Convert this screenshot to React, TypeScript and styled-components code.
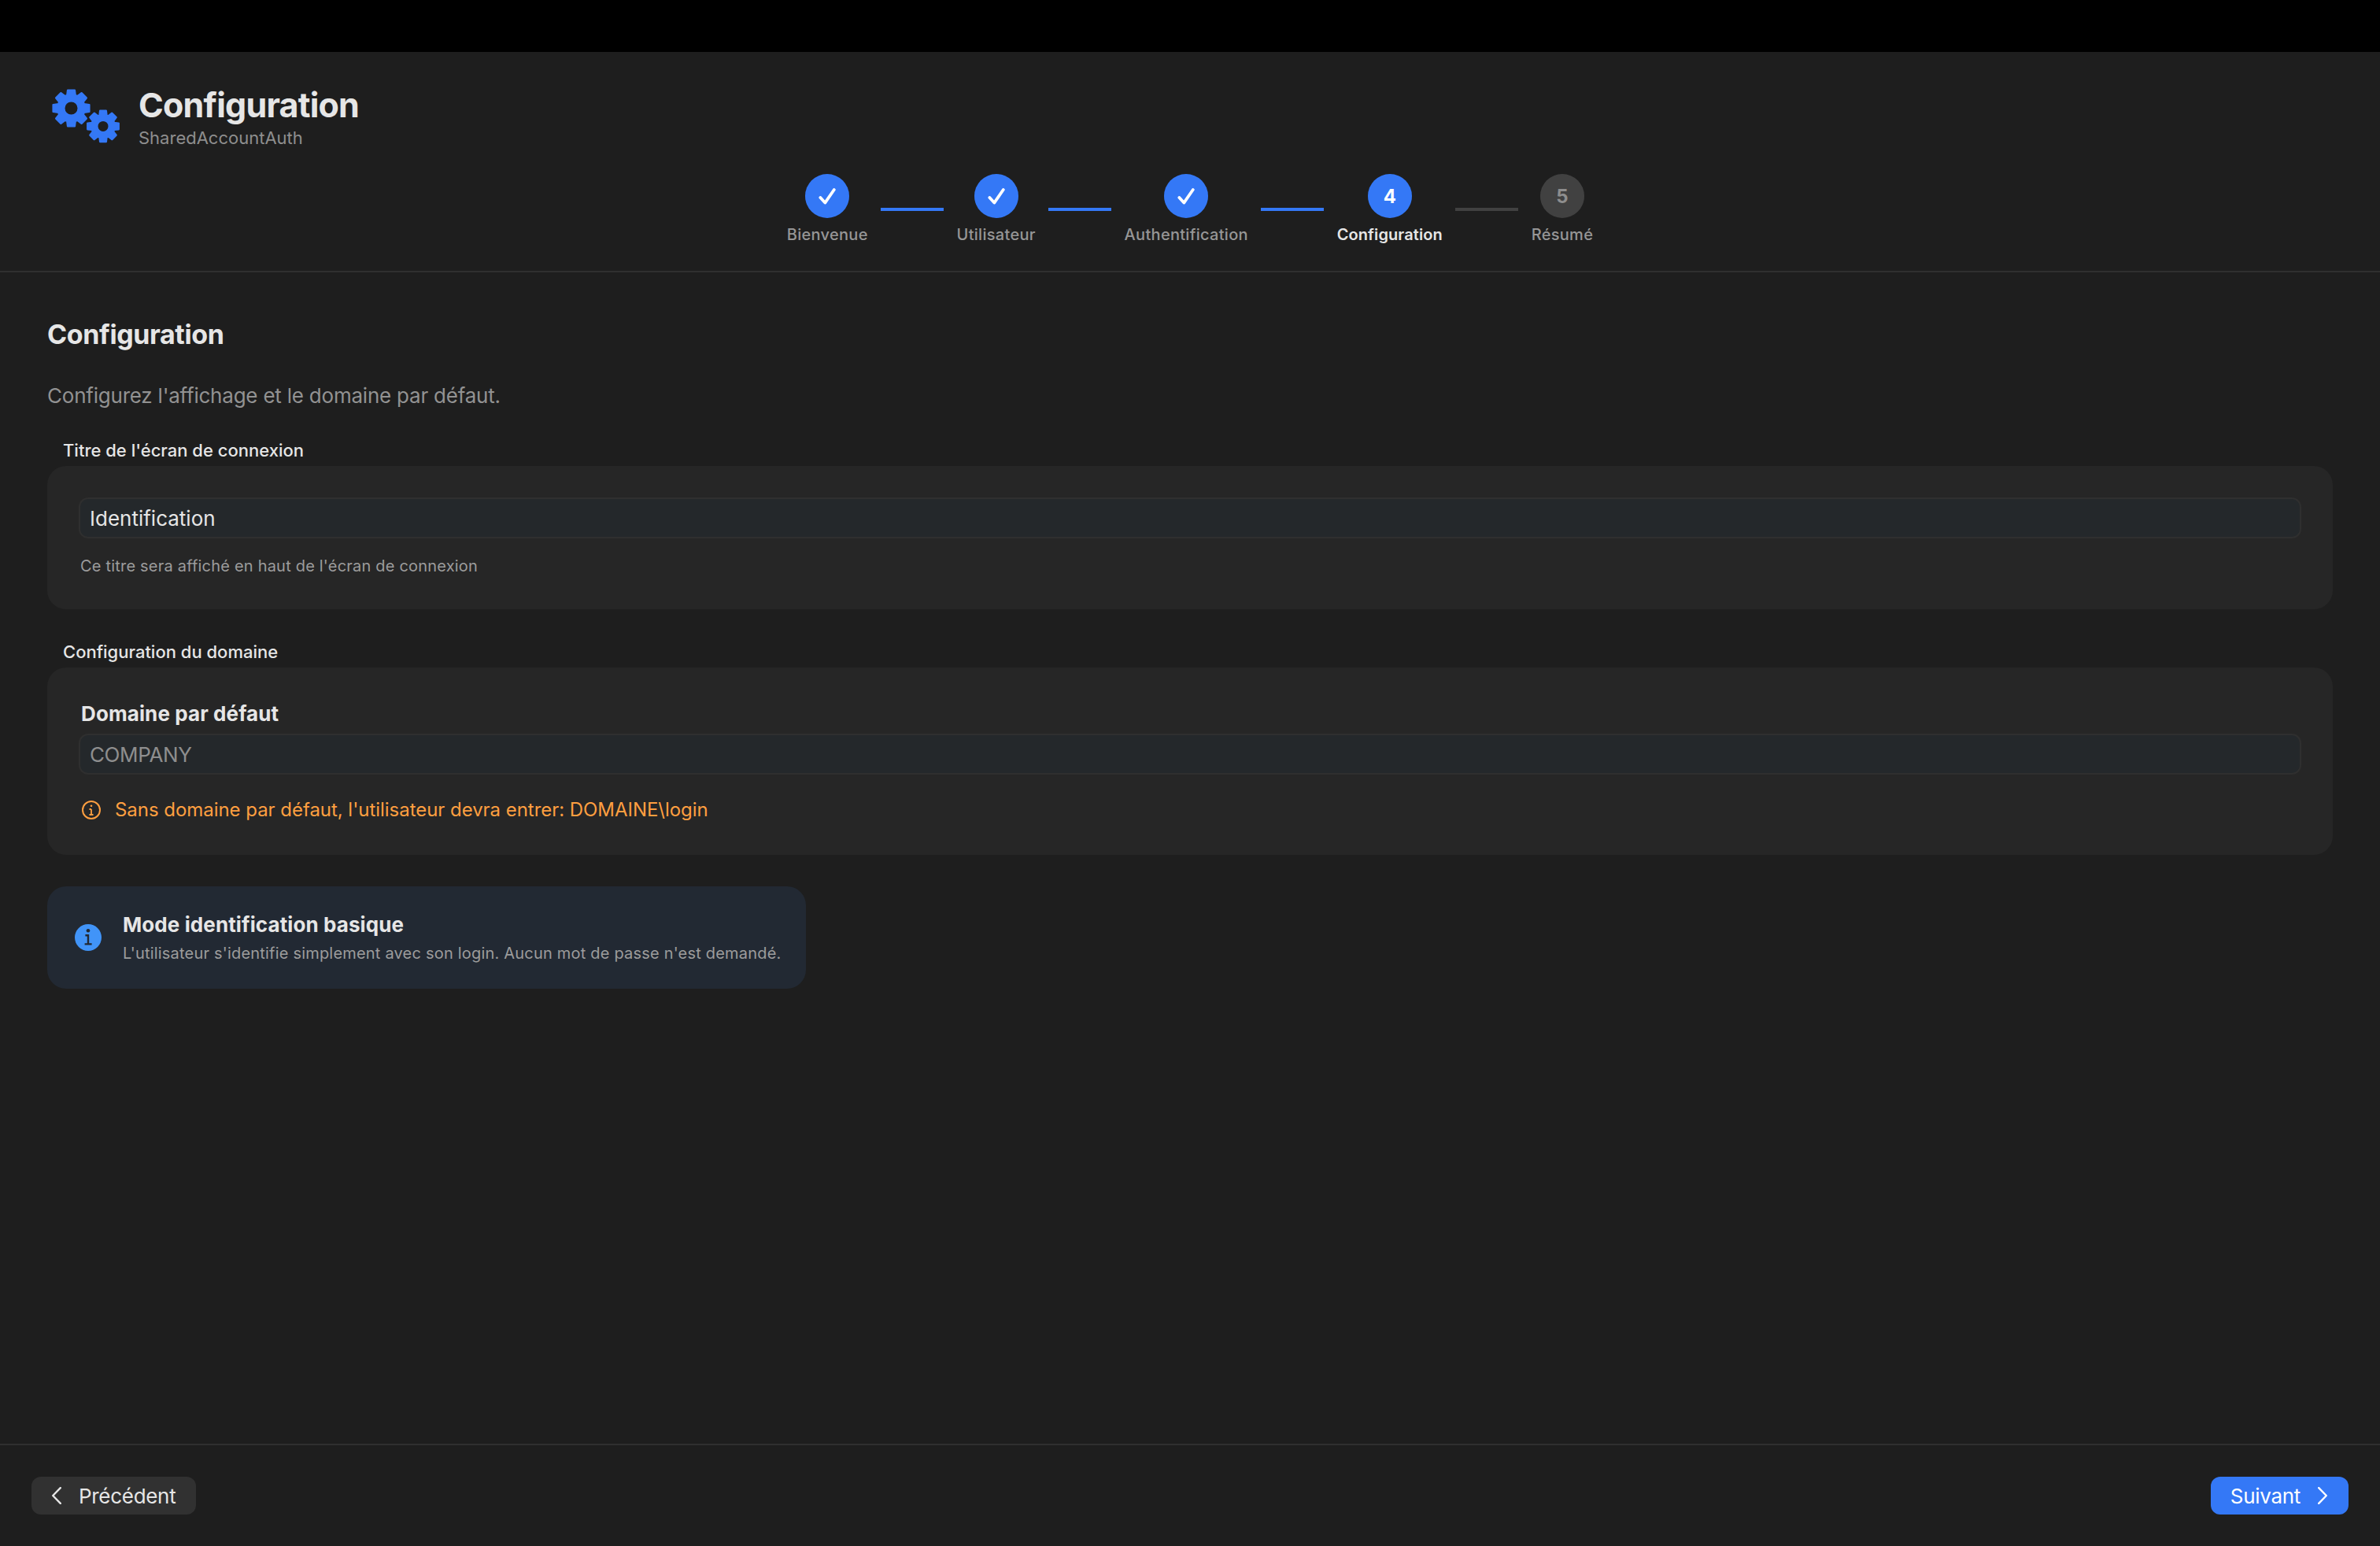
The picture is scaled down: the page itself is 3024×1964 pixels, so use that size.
import React from "react";
import styled, { createGlobalStyle } from "styled-components";

const GlobalStyle = createGlobalStyle`
  html, body {
    margin: 0;
    padding: 0;
    background: #1e1e1e;
    font-family: Inter, "Liberation Sans", sans-serif;
  }
  * {
    box-sizing: border-box;
  }
`;

const BLUE = "#3478f6";

const Page = styled.div`
  display: flex;
  flex-direction: column;
  height: 100vh;
  overflow: hidden;
  background: #1e1e1e;
`;

const TopBar = styled.div`
  height: 66px;
  flex-shrink: 0;
  background: #000;
`;

const Header = styled.header`
  display: flex;
  flex-direction: column;
  height: 280px;
  flex-shrink: 0;
  padding: 47px 66px 0;
  border-bottom: 2px solid #2f2f2f;
`;

const Brand = styled.div`
  display: flex;
  gap: 24px;
  height: 108px;
`;

const BrandText = styled.div`
  display: flex;
  flex-direction: column;
  margin-top: -7px;
`;

const AppTitle = styled.h1`
  margin: 0;
  font-size: 43px;
  line-height: 54px;
  font-weight: 700;
  letter-spacing: -0.8px;
  color: #e6e6e6;
`;

const AppSubtitle = styled.span`
  font-size: 22px;
  line-height: 30px;
  color: #8e8e8e;
`;

const Stepper = styled.div`
  display: flex;
  justify-content: center;
  align-items: flex-start;
  gap: 16.4px;
`;

const Step = styled.div`
  display: flex;
  flex-direction: column;
  align-items: center;
  gap: 9px;
`;

const StepCircle = styled.div<{ $on: boolean }>`
  display: flex;
  align-items: center;
  justify-content: center;
  width: 56px;
  height: 56px;
  border-radius: 50%;
  font-size: 24px;
  font-weight: 700;
  background: ${(p) => (p.$on ? BLUE : "#414141")};
  color: ${(p) => (p.$on ? "#fff" : "#8e8e8e")};
`;

const StepLabel = styled.span<{ $current: boolean }>`
  font-size: 20px;
  line-height: 24px;
  font-weight: ${(p) => (p.$current ? 600 : 500)};
  letter-spacing: ${(p) => (p.$current ? "0.1px" : "0.3px")};
  color: ${(p) => (p.$current ? "#e6e6e6" : "#969696")};
  white-space: nowrap;
`;

const Connector = styled.div<{ $on: boolean }>`
  width: 80px;
  height: 4px;
  margin-top: 43px;
  background: ${(p) => (p.$on ? BLUE : "#414141")};
`;

const Main = styled.main`
  flex: 1;
  padding: 0 60px;
`;

const SectionTitle = styled.h2`
  margin: 57px 0 0;
  font-size: 34px;
  line-height: 44px;
  font-weight: 700;
  letter-spacing: -0.4px;
  color: #e6e6e6;
`;

const Description = styled.p`
  margin: 39px 0 0;
  font-size: 26px;
  line-height: 34px;
  letter-spacing: -0.22px;
  color: #929292;
`;

const GroupLabel = styled.div<{ $top: number }>`
  height: 34px;
  margin: ${(p) => p.$top}px 0 0 20px;
  font-size: 22px;
  line-height: 28px;
  font-weight: 500;
  color: #e6e6e6;
`;

const Card = styled.section`
  padding: 40px 40px 43px;
  border-radius: 24px;
  background: #262626;
`;

const Input = styled.div<{ $placeholder?: boolean }>`
  display: flex;
  align-items: center;
  height: 52px;
  padding: 0 12px;
  border: 2px solid #2f2f2f;
  border-radius: 12px;
  background: #24282b;
  font-size: 26px;
  letter-spacing: ${(p) => (p.$placeholder ? "-0.4px" : "0")};
  color: ${(p) => (p.$placeholder ? "#8e8e8e" : "#e6e6e6")};
`;

const Hint = styled.p`
  margin: 23px 0 0;
  padding-left: 2px;
  font-size: 20px;
  line-height: 24px;
  letter-spacing: 0.2px;
  color: #9c9c9c;
`;

const DomainCard = styled(Card)`
  padding-bottom: 45px;
`;

const FieldTitle = styled.div`
  height: 44px;
  margin-left: 3px;
  font-size: 26px;
  line-height: 38px;
  font-weight: 700;
  letter-spacing: 0.1px;
  color: #e6e6e6;
`;

const Warning = styled.div`
  display: flex;
  align-items: center;
  gap: 18px;
  margin: 33px 0 0 4px;
  font-size: 24px;
  line-height: 24px;
  letter-spacing: -0.04px;
  color: #ff9f40;
`;

const InfoBox = styled.aside`
  display: flex;
  align-items: center;
  gap: 27px;
  width: 964px;
  height: 130px;
  margin-top: 40px;
  padding: 0 20px 0 35px;
  border-radius: 24px;
  background: #222933;
`;

const InfoText = styled.div`
  display: flex;
  flex-direction: column;
  gap: 6px;
`;

const InfoTitle = styled.strong`
  font-size: 26px;
  line-height: 34px;
  font-weight: 700;
  letter-spacing: 0.1px;
  color: #e6e6e6;
`;

const InfoSub = styled.span`
  font-size: 20px;
  line-height: 26px;
  letter-spacing: 0.2px;
  color: #9c9c9c;
  white-space: nowrap;
`;

const Footer = styled.footer`
  display: flex;
  align-items: center;
  justify-content: space-between;
  height: 130px;
  flex-shrink: 0;
  padding: 0 40px;
  border-top: 2px solid #2f2f2f;
`;

const NavButton = styled.button<{ $primary?: boolean }>`
  display: flex;
  align-items: center;
  gap: 22px;
  height: 48px;
  padding: ${(p) => (p.$primary ? "0 27px 0 25px" : "0 26px")};
  border: none;
  border-radius: 12px;
  font-family: inherit;
  font-size: 26px;
  letter-spacing: -0.3px;
  background: ${(p) => (p.$primary ? BLUE : "#313131")};
  color: ${(p) => (p.$primary ? "#fff" : "#e6e6e6")};
`;

const gearPath = (cx: number, cy: number, r: number, hole: number) => {
  const tip = r - 1.2;
  const valley = r * 0.75 - 1.2;
  const pt = (rad: number, a: number) => `${(cx + rad * Math.cos(a)).toFixed(2)} ${(cy + rad * Math.sin(a)).toFixed(2)}`;
  let d = "";
  for (let i = 0; i < 8; i++) {
    const a = (i * Math.PI) / 4 - Math.PI / 2;
    d += `${i === 0 ? "M" : "L"}${pt(valley, a - 0.31)} L${pt(tip, a - 0.19)} L${pt(tip, a + 0.19)} L${pt(valley, a + 0.31)} `;
  }
  const h = hole + 1.2;
  d += `Z M${cx - h} ${cy} a${h} ${h} 0 1 0 ${2 * h} 0 a${h} ${h} 0 1 0 ${-2 * h} 0 Z`;
  return d;
};

const GearsIcon = () => (
  <svg width="86" height="69" viewBox="0 0 86 69">
    <path d={gearPath(24.5, 24.5, 24.5, 8)} fill={BLUE} fillRule="evenodd" stroke={BLUE} strokeWidth="2.4" strokeLinejoin="round" />
    <path d={gearPath(65, 47.4, 21.3, 6.5)} fill={BLUE} fillRule="evenodd" stroke={BLUE} strokeWidth="2.4" strokeLinejoin="round" />
  </svg>
);

const CheckMark = () => (
  <svg width="22" height="22" viewBox="0 0 22 22" fill="none">
    <path d="M2.4 13 L8.3 19.6 L19.8 3" stroke="#fff" strokeWidth="3.8" strokeLinecap="round" strokeLinejoin="round" />
  </svg>
);

const Chevron = ({ right }: { right?: boolean }) => (
  <svg width="12" height="22" viewBox="0 0 12 22" fill="none">
    <path
      d={right ? "M1.2 1.2 L10.8 11 L1.2 20.8" : "M10.8 1.2 L1.2 11 L10.8 20.8"}
      stroke="currentColor"
      strokeWidth="2.4"
      strokeLinecap="round"
      strokeLinejoin="round"
    />
  </svg>
);

const WarningIcon = () => (
  <svg width="24" height="24" viewBox="0 0 24 24" fill="none" stroke="#ff9f40" strokeWidth="2">
    <circle cx="12" cy="12" r="11" />
    <path d="M12 11v7M9.5 11H12M9.5 18h5" strokeWidth="1.8" />
    <circle cx="12" cy="6.8" r="1.3" fill="#ff9f40" stroke="none" />
  </svg>
);

const InfoIcon = () => (
  <svg width="34" height="34" viewBox="0 0 34 34" fill="none">
    <circle cx="17" cy="17" r="17" fill="#4194f8" />
    <circle cx="17" cy="8.2" r="2.3" fill="#222933" />
    <path d="M13.4 14.2H17V25.4M12.6 25.4H21.6" stroke="#222933" strokeWidth="2.4" />
  </svg>
);

const steps = ["Bienvenue", "Utilisateur", "Authentification", "Configuration", "Résumé"];
const currentStep = 3;

const App = () => {
  return (
    <Page>
      <GlobalStyle />
      <TopBar />
      <Header>
        <Brand>
          <GearsIcon />
          <BrandText>
            <AppTitle>Configuration</AppTitle>
            <AppSubtitle>SharedAccountAuth</AppSubtitle>
          </BrandText>
        </Brand>
        <Stepper>
          {steps.map((label, i) => (
            <React.Fragment key={label}>
              {i > 0 && <Connector $on={i <= currentStep} />}
              <Step>
                <StepCircle $on={i <= currentStep}>{i < currentStep ? <CheckMark /> : i + 1}</StepCircle>
                <StepLabel $current={i === currentStep}>{label}</StepLabel>
              </Step>
            </React.Fragment>
          ))}
        </Stepper>
      </Header>
      <Main>
        <SectionTitle>Configuration</SectionTitle>
        <Description>Configurez l'affichage et le domaine par défaut.</Description>
        <GroupLabel $top={38}>Titre de l'écran de connexion</GroupLabel>
        <Card>
          <Input>Identification</Input>
          <Hint>Ce titre sera affiché en haut de l'écran de connexion</Hint>
        </Card>
        <GroupLabel $top={40}>Configuration du domaine</GroupLabel>
        <DomainCard>
          <FieldTitle>Domaine par défaut</FieldTitle>
          <Input $placeholder>COMPANY</Input>
          <Warning>
            <WarningIcon />
            Sans domaine par défaut, l'utilisateur devra entrer: DOMAINE\login
          </Warning>
        </DomainCard>
        <InfoBox>
          <InfoIcon />
          <InfoText>
            <InfoTitle>Mode identification basique</InfoTitle>
            <InfoSub>L'utilisateur s'identifie simplement avec son login. Aucun mot de passe n'est demandé.</InfoSub>
          </InfoText>
        </InfoBox>
      </Main>
      <Footer>
        <NavButton>
          <Chevron />
          Précédent
        </NavButton>
        <NavButton $primary>
          Suivant
          <Chevron right />
        </NavButton>
      </Footer>
    </Page>
  );
};

export default App;
